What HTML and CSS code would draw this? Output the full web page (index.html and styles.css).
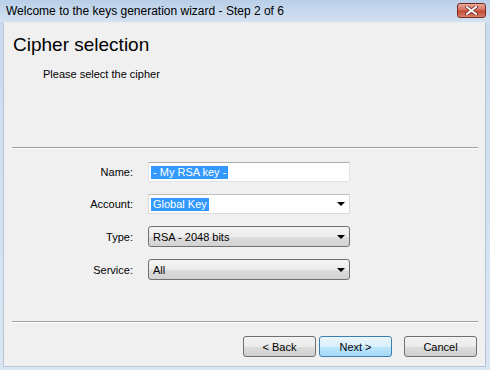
FILE: index.html
```html
<!DOCTYPE html>
<html lang="en">

<head>
    <meta charset="UTF-8">
    <title>Welcome to the keys generation wizard - Step 2 of 6</title>
    <link rel="stylesheet" href="styles.css">
</head>

<body>

    <div class="window">
        <div class="titlebar">
            <span class="title">Welcome to the keys generation wizard - Step 2 of 6</span>
            <div class="close">
                <svg width="13" height="9" viewBox="0 0 13 9">
                    <path d="M2 1 L11 8 M11 1 L2 8" stroke="#5a1a10" stroke-width="3.4" stroke-linecap="square" fill="none"/>
                    <path d="M2 1 L11 8 M11 1 L2 8" stroke="#ffffff" stroke-width="2" stroke-linecap="square" fill="none"/>
                </svg>
            </div>
        </div>

        <div class="client">
            <div class="header">
                <h1>Cipher selection</h1>
                <p>Please select the cipher</p>
            </div>

            <div class="sep"></div>

            <div class="form">
                <label>Name:</label>
                <div class="field textbox"><span class="selected">- My RSA key -</span></div>

                <label>Account:</label>
                <div class="field editcombo">
                    <span class="selected">Global Key</span>
                    <svg class="arrow" width="8" height="4" viewBox="0 0 8 4"><path d="M0 0 H8 L4 4 Z" fill="#000"/></svg>
                </div>

                <label>Type:</label>
                <div class="field combo">
                    <span>RSA - 2048 bits</span>
                    <svg class="arrow" width="8" height="4" viewBox="0 0 8 4"><path d="M0 0 H8 L4 4 Z" fill="#000"/></svg>
                </div>

                <label>Service:</label>
                <div class="field combo">
                    <span>All</span>
                    <svg class="arrow" width="8" height="4" viewBox="0 0 8 4"><path d="M0 0 H8 L4 4 Z" fill="#000"/></svg>
                </div>
            </div>

            <div class="sep sep-bottom"></div>

            <div class="buttons">
                <button class="btn">&lt; Back</button>
                <button class="btn btn-default">Next &gt;</button>
                <button class="btn btn-cancel">Cancel</button>
            </div>
        </div>
    </div>

</body>

</html>
```

FILE: styles.css
```css
body {
    margin: 0;
    font-family: "Liberation Sans", Arial, sans-serif;
    color: #000;
}

.window {
    width: 490px;
    height: 370px;
    display: flex;
    flex-direction: column;
    background: linear-gradient(#c9daee, #dbe6f3);
    box-sizing: border-box;
}

/* Title bar */
.titlebar {
    height: 22px;
    display: flex;
    align-items: center;
    justify-content: space-between;
    padding: 0 4px 0 6px;
    background: linear-gradient(#b9cfe8, #d3e1f1);
}

.title {
    font-size: 12px;
    color: #000;
}

.close {
    width: 29px;
    height: 15px;
    margin-top: -2px;
    box-sizing: border-box;
    border: 1px solid #7a2a1e;
    border-radius: 3px;
    background: linear-gradient(#e6a99c, #d4705f 45%, #c24a34 55%, #d8806a);
    display: flex;
    align-items: center;
    justify-content: center;
}

/* Client area */
.client {
    flex: 1;
    margin: 0 4px 3px 3px;
    background-color: #f0f0f0;
    border: 1px solid #b5c4d6;
    border-top-color: #e9eef5;
    box-sizing: border-box;
    display: flex;
    flex-direction: column;
}

.header {
    padding: 11px 0 0 9px;
}

.header h1 {
    margin: 0;
    font-size: 19px;
    line-height: 22px;
    font-weight: normal;
}

.header p {
    margin: 12px 0 0 30px;
    font-size: 11px;
    line-height: 13px;
}

.sep {
    height: 1px;
    margin: 66px 7px 0 8px;
    background-color: #a0a0a0;
    border-bottom: 1px solid #ffffff;
}

.sep-bottom {
    margin-top: 41px;
}

/* Form */
.form {
    display: grid;
    grid-template-columns: 129px 202px;
    grid-template-rows: 20px 20px 21px 21px;
    column-gap: 15px;
    row-gap: 12px;
    padding-top: 13px;
    font-size: 11px;
}

.form label {
    text-align: right;
    align-self: center;
}

.field {
    display: flex;
    align-items: center;
    justify-content: space-between;
    box-sizing: border-box;
    padding: 0 4px 0 2px;
}

.textbox {
    background-color: #fff;
    border: 1px solid #e2e3ea;
    border-top-color: #abadb3;
}

.editcombo {
    background-color: #fff;
    border: 1px solid #dcdcdc;
    border-top-color: #c0c0c0;
}

.combo {
    border: 1px solid #707070;
    border-radius: 3px;
    background: linear-gradient(#f4f4f4, #ececec 50%, #dedede 50%, #d2d2d2);
    padding-left: 4px;
}

.selected {
    background-color: #3399ff;
    color: #fff;
    padding: 0 2px;
    line-height: 13px;
}

.arrow {
    flex: none;
}

/* Buttons */
.buttons {
    display: flex;
    justify-content: flex-end;
    padding: 13px 8px 0 0;
}

.btn {
    width: 73px;
    height: 21px;
    margin-left: 3px;
    font-family: "Liberation Sans", Arial, sans-serif;
    font-size: 11px;
    color: #000;
    border: 1px solid #707070;
    border-radius: 3px;
    background: linear-gradient(#f2f2f2, #ebebeb 50%, #dddddd 50%, #cfcfcf);
    padding: 0;
}

.btn-default {
    border-color: #3c7fb1;
    background: linear-gradient(#eaf6fd, #d9f0fc 50%, #bee6fd 50%, #a7d9f5);
}

.btn-cancel {
    margin-left: 12px;
}
```
